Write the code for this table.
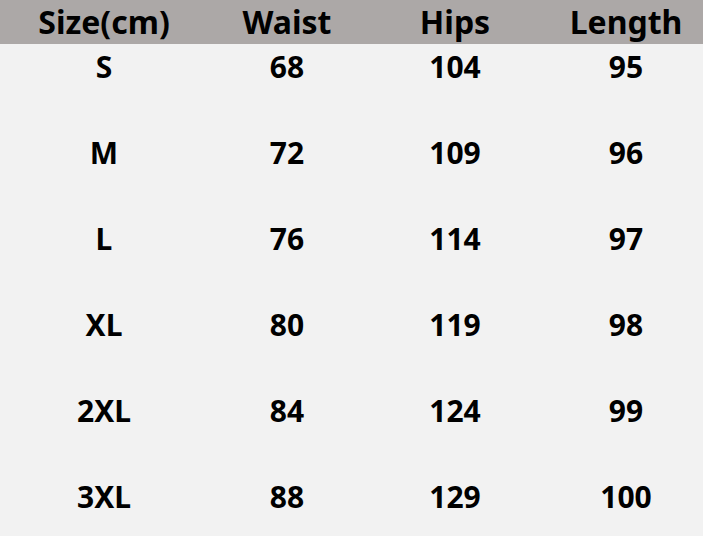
const header = ['Size(cm)', 'Waist', 'Hips', 'Length'];

const rows = [
  ['S', '68', '104', '95'],
  ['M', '72', '109', '96'],
  ['L', '76', '114', '97'],
  ['XL', '80', '119', '98'],
  ['2XL', '84', '124', '99'],
  ['3XL', '88', '129', '100'],
];

const cols = 'grid grid-cols-[208px_158px_178px_164px]';

export default function App() {
  return (
    <div className="w-[703px] h-[536px] overflow-hidden bg-[#f2f2f2] text-black font-bold font-['Noto_Sans',sans-serif]">
      {/* Header */}
      <div className={`${cols} h-[44px] bg-[#aca8a7] text-[32px] leading-[44px]`}>
        {header.map((h) => (
          <div key={h} className="text-center whitespace-nowrap">
            {h}
          </div>
        ))}
      </div>

      {/* Rows */}
      {rows.map((r) => (
        <div key={r[0]} className={`${cols} h-[86px] text-[30px] leading-[46px]`}>
          {r.map((c, i) => (
            <div key={i} className="text-center">
              {c}
            </div>
          ))}
        </div>
      ))}
    </div>
  );
}
